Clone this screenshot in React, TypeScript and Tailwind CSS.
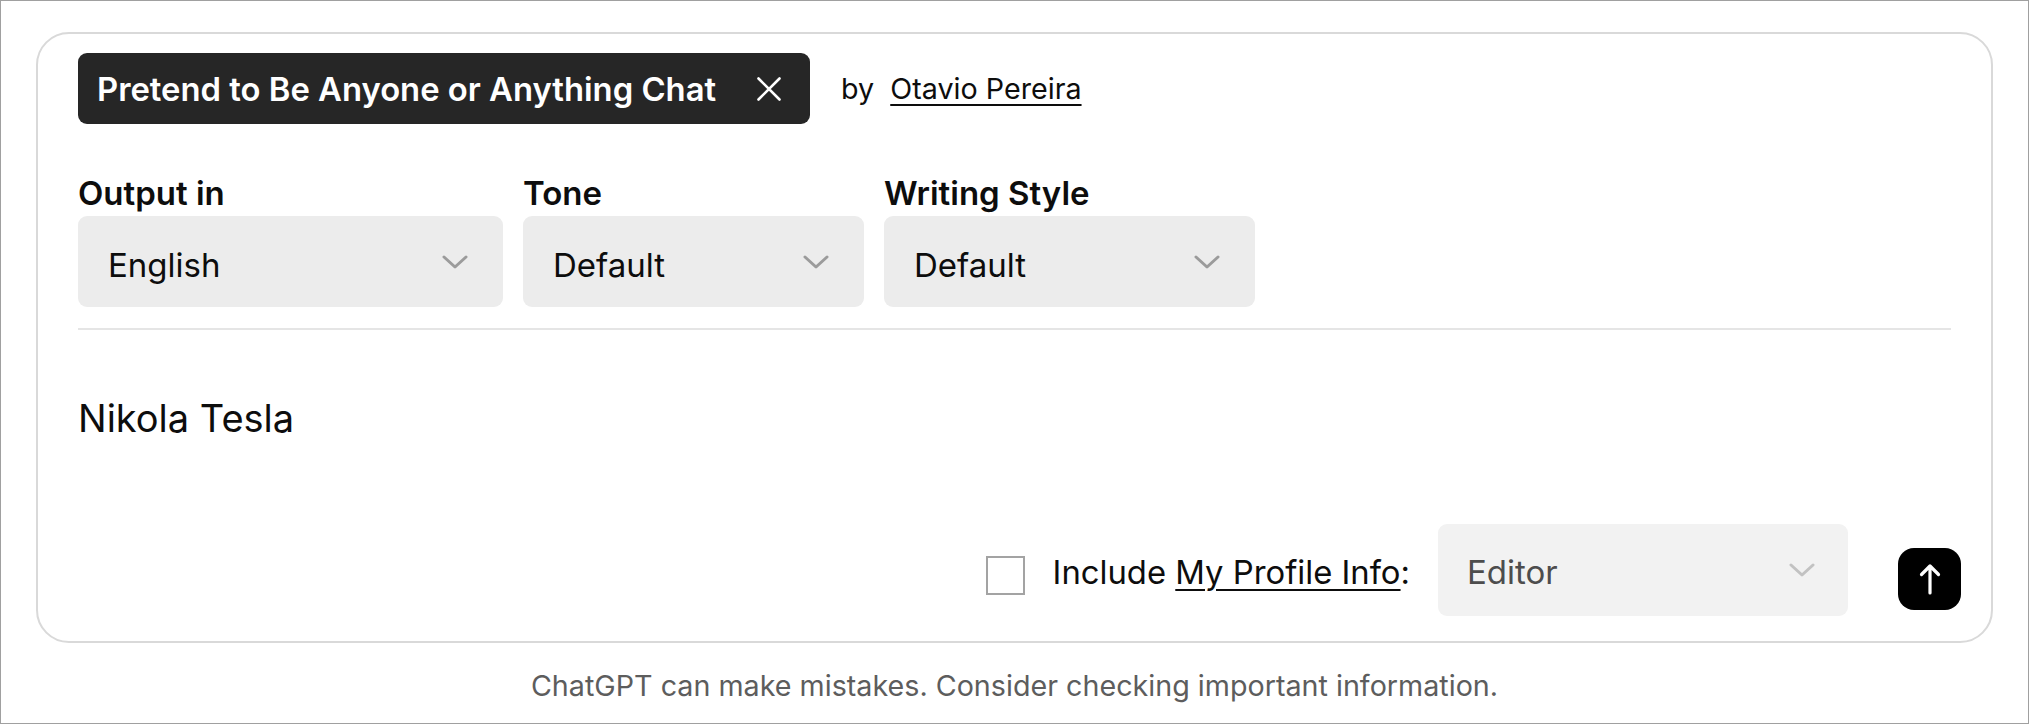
import React from "react";

function Chevron({ color }: { color: string }) {
  return (
    <svg width="26" height="14" viewBox="0 0 26 14" fill="none" className={color}>
      <polyline points="2,2 13,12 24,2" stroke="currentColor" strokeWidth="3" strokeLinecap="round" strokeLinejoin="round" />
    </svg>
  );
}

function Select({ label, value, width }: { label: string; value: string; width: string }) {
  return (
    <div className={`flex flex-col ${width}`}>
      <p className="mb-[3px] text-[33px] font-semibold leading-[40px] text-[#0d0d0d]">{label}</p>
      <div className="flex h-[91px] items-center justify-between rounded-[9px] bg-[#ececec] pl-[30px] pr-[35px]">
        <span className="pt-[6px] text-[33px] leading-[40px] text-[#0d0d0d]">{value}</span>
        <Chevron color="text-[#9b9b9b]" />
      </div>
    </div>
  );
}

export default function App() {
  return (
    <div className="h-[724px] w-full border border-[#a0a0a0] bg-white px-[35px] pt-[31px] font-['Inter',sans-serif]">
      <div className="rounded-[33px] border-2 border-[#d9d9d9] px-[40px] pb-[25px] pt-[19px]">
        {/* prompt chip + author */}
        <div className="flex items-center">
          <div className="flex h-[71px] items-center gap-[41px] rounded-[9px] bg-[#262626] pl-[19px] pr-[29px]">
            <span className="text-[32.8px] font-semibold leading-[40px] text-white">Pretend to Be Anyone or Anything Chat</span>
            <svg width="24" height="24" viewBox="0 0 24 24" fill="none" className="text-white">
              <path d="M1.5 1.5 L22.5 22.5 M22.5 1.5 L1.5 22.5" stroke="currentColor" strokeWidth="2.6" strokeLinecap="round" />
            </svg>
          </div>
          <span className="ml-[31px] text-[28.7px] leading-[40px] text-[#0d0d0d]">by</span>
          <a className="ml-[16px] text-[28.7px] leading-[40px] text-[#0d0d0d] underline decoration-[2px] underline-offset-[5px]">
            Otavio Pereira
          </a>
        </div>

        {/* selects */}
        <div className="mt-[49px] flex gap-[20px]">
          <Select label="Output in" value="English" width="w-[425px]" />
          <Select label="Tone" value="Default" width="w-[341px]" />
          <Select label="Writing Style" value="Default" width="w-[371px]" />
        </div>

        <div className="mt-[21px] h-[2px] bg-[#e5e5e5]" />

        <div className="mt-[61px] text-[38px] leading-[55px] text-[#0d0d0d]">Nikola Tesla</div>

        {/* bottom row */}
        <div className="-mr-[10px] mt-[78px] flex h-[92px] items-center justify-end">
          <div className="mt-[10px] h-[39px] w-[39px] border-2 border-[#a3a3a3] bg-white" />
          <p className="ml-[28px] mt-[3px] text-[32.8px] leading-[40px] text-[#0d0d0d]">
            Include{" "}
            <span className="underline decoration-[2px] underline-offset-[5px]">My Profile Info</span>:
          </p>
          <div className="ml-[28px] flex h-[92px] w-[410px] items-center justify-between rounded-[9px] bg-[#f2f2f2] pl-[29px] pr-[33px]">
            <span className="pt-[3px] text-[33px] leading-[40px] text-[#4d4d4d]">Editor</span>
            <Chevron color="text-[#c2c2c2]" />
          </div>
          <button className="ml-[50px] mt-[18px] flex h-[62px] w-[63px] items-center justify-center rounded-[16px] bg-black">
            <svg width="22" height="32" viewBox="0 0 22 32" fill="none" className="text-white">
              <path d="M11 30 V3 M2.5 11.5 L11 3 L19.5 11.5" stroke="currentColor" strokeWidth="3.2" strokeLinecap="round" strokeLinejoin="round" />
            </svg>
          </button>
        </div>
      </div>

      <p className="mt-[21px] text-center text-[28.7px] leading-[43px] text-[#5d5d5d]">
        ChatGPT can make mistakes. Consider checking important information.
      </p>
    </div>
  );
}
